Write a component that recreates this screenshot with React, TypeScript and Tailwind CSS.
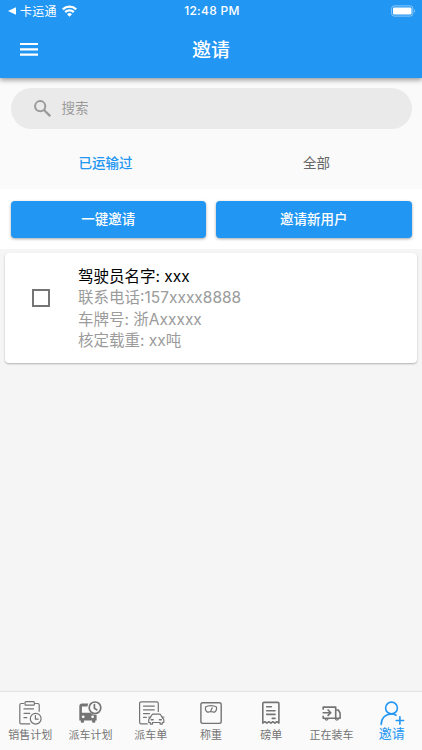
import React from 'react'

const Clock = ({ cx, cy, r }: { cx: number; cy: number; r: number }) => (
    <>
        <circle cx={cx} cy={cy} r={r} />
        <path d={`M${cx - 0.6} ${cy - 3.2}v3.7l2.4 1.6`} />
    </>
)

const iconProps = {
    viewBox: '0 0 24 24',
    fill: 'none',
    stroke: 'currentColor',
    strokeWidth: 1.2,
    strokeLinecap: 'round',
    strokeLinejoin: 'round',
    className: 'w-6 h-6 shrink-0 overflow-visible',
} as const

const PlanIcon = () => (
    <svg {...iconProps}>
        <path d="M5.6 2.5H3.2a1.4 1.4 0 0 0-1.4 1.4v17.5a1.4 1.4 0 0 0 1.4 1.4h8.6M17.6 2.5h2.2a1.4 1.4 0 0 1 1.4 1.4v6.3" />
        <rect x="7" y="0.7" width="9.4" height="3.5" rx="1" />
        <path d="M6 7.9h9.5M6 12.3h5.8M6 16.7h2.8" />
        <circle cx="17.7" cy="17.7" r="5.4" />
        <path d="M17.4 14.6v3.6h2.8" />
    </svg>
)

const BusIcon = () => (
    <svg {...iconProps}>
        <path
            d="M4 2.6h6.3a7.6 7.6 0 0 0-.8 3H3.9v6.1h8.4a8 8 0 0 0 6.3 2.4v5.3h-1.3v1.4a1 1 0 0 1-1 1h-1.2a1 1 0 0 1-1-1v-1.4H6v1.4a1 1 0 0 1-1 1H3.8a1 1 0 0 1-1-1v-1.4H1.3V5.4C1.3 3.5 2.4 2.6 4 2.6Z"
            fill="currentColor"
            stroke="none"
        />
        <circle cx="5.2" cy="15.8" r="1.4" fill="#fafafa" stroke="none" />
        <circle cx="14.6" cy="15.8" r="1.4" fill="#fafafa" stroke="none" />
        <g strokeWidth="1.7">
            <Clock cx={17} cy={6.8} r={5.8} />
        </g>
    </svg>
)

const DispatchIcon = () => (
    <svg {...iconProps}>
        <path d="M8.3 22.9H2.2A1.6 1.6 0 0 1 .6 21.3V2.4A1.6 1.6 0 0 1 2.2.8h15.5a1.6 1.6 0 0 1 1.6 1.6v8" />
        <path d="M4.5 5.1h10.8M4.5 8.8h10.8M4.5 12.6h6M4.5 16.4h2.8" />
        <path d="m11 17.1 1.8-3.1q.4-.8 1.3-.8h6.4q.9 0 1.3.8l1.8 3.1q1.2.5 1.2 1.7v2.7h-1.5v1.6h-2.2v-1.6h-7.6v1.6h-2.2v-1.6H9.7v-2.7q0-1.2 1.3-1.7ZM9.7 16h1.6M23.3 16h1.6" />
        <path d="M12.3 18.7h1.8M20.5 18.7h1.8" strokeWidth="1.6" />
    </svg>
)

const ScaleIcon = () => (
    <svg {...iconProps}>
        <rect x="1.9" y="1.8" width="20.3" height="20.6" rx="1.8" strokeWidth="1.4" />
        <path d="M6.5 6.1c2.8-1.9 8.1-1.9 11 0 .4 2.5-.6 4.4-2.3 5.2-1.5-1-4.9-1-6.4 0C7.1 10.5 6.1 8.6 6.5 6.1ZM11.7 10.2l1.5-3.4" />
    </svg>
)

const BillIcon = () => (
    <svg {...iconProps} strokeWidth="1.6">
        <path d="M3.8 22.1V2.6q0-1.2 1.2-1.2h13.7q1.2 0 1.2 1.2v19.5l-2.1-1.4-1.9 1.5-2-1.5-2 1.5-2-1.5-2 1.5-2-1.5Z" />
        <path d="M7.7 5.7h4.7M7.7 9.7h8.3M7.7 13.4h8.3M13.3 17.4H16" />
    </svg>
)

const LoadingIcon = () => (
    <svg {...iconProps} strokeWidth="1.6" strokeLinecap="butt">
        <path d="M3.2 8.7V6.1h12.5v11.2M3.2 14.7v2.6h16.9v-5.1L18.3 9h-2.6" />
        <path d="M2.6 11.7h7.9M7.6 8.5l3.2 3.2-3.2 3.2" />
        <path d="M5 17.6a1.5 1.5 0 0 0 3 0M15.4 17.6a1.5 1.5 0 0 0 3 0" strokeWidth="1.3" />
    </svg>
)

const InviteIcon = () => (
    <svg {...iconProps} strokeWidth="1.6">
        <circle cx="11.5" cy="7" r="5.9" />
        <path d="M1.2 23.4C1.2 16.8 5.7 13 11.3 13c1.8 0 3.5.4 4.8 1.2M19.9 15.8v7.4M16.2 19.5h7.4" />
    </svg>
)

const tabs = [
    { label: '销售计划', icon: <PlanIcon /> },
    { label: '派车计划', icon: <BusIcon /> },
    { label: '派车单', icon: <DispatchIcon /> },
    { label: '称重', icon: <ScaleIcon /> },
    { label: '磅单', icon: <BillIcon /> },
    { label: '正在装车', icon: <LoadingIcon /> },
    { label: '邀请', icon: <InviteIcon />, active: true },
]

const App = () => {
    return (
        <div className="flex h-[750px] w-[422px] flex-col overflow-hidden bg-[#f5f5f5] font-['Inter','Noto_Sans_CJK_SC',sans-serif]">
            <header className="relative z-10 h-[78px] shrink-0 bg-[#2196f3] text-white shadow-[0_2px_5px_rgba(0,0,0,0.4)]">
                <div className="grid h-[22px] grid-cols-3 items-center pl-2 pr-1.5 text-[12px]">
                    <div className="flex items-center">
                        <svg className="h-2 w-2" viewBox="0 0 8 8" fill="currentColor">
                            <path d="M0 4 8 .2v7.6Z" />
                        </svg>
                        <span className="ml-1 pt-px leading-none tracking-[0.3px]">卡运通</span>
                        <svg className="-mt-px ml-[5px] h-3 w-[15px]" viewBox="0 0 15 12" fill="none" stroke="currentColor" strokeWidth="2.3">
                            <path d="M.8 4.4a9.6 9.6 0 0 1 13.4 0M3.2 7.2a6.2 6.2 0 0 1 8.6 0" />
                            <path d="M7.5 11.7 5 9.2a3.6 3.6 0 0 1 5 0Z" fill="currentColor" stroke="none" />
                        </svg>
                    </div>
                    <div className="whitespace-nowrap text-center font-medium leading-none tracking-[0.3px]">12:48 PM</div>
                    <svg className="-mt-px h-3 w-[25px] justify-self-end" viewBox="0 0 25 12" fill="none">
                        <rect x="0.6" y="0.9" width="21.2" height="10.2" rx="2.6" stroke="#8dc9f9" />
                        <rect x="2" y="2.4" width="18.5" height="7.2" rx="1.4" fill="#fff" />
                        <path d="M23.2 4.3v3.4q1-.5 1-1.7t-1-1.7Z" fill="#8dc9f9" />
                    </svg>
                </div>
                <div className="grid h-[54px] grid-cols-3 items-center px-5">
                    <svg className="h-[13px] w-[18px]" viewBox="0 0 18 13" fill="currentColor">
                        <path d="M0 0h18v2.1H0zM0 5.3h18v2.1H0zM0 10.6h18v2.1H0z" />
                    </svg>
                    <h1 className="pt-0.5 text-center text-[19px] font-medium leading-none">邀请</h1>
                </div>
            </header>

            <div className="h-[111px] shrink-0 bg-[#fafafa] pt-2.5">
                <div className="mx-[10.5px] flex h-[40.5px] items-center rounded-full bg-[#eaeaea] pl-[23px] text-[#9a9a9a]">
                    <svg className="h-[17px] w-[17px]" viewBox="0 0 17 17" fill="none" stroke="currentColor" strokeWidth="2">
                        <circle cx="6.2" cy="6.2" r="5.1" />
                        <path d="m10 10 6.2 6.2" strokeWidth="2.3" />
                    </svg>
                    <span className="ml-[11px] text-[13.5px]">搜索</span>
                </div>
                <div className="grid h-[60px] grid-cols-2 items-center pt-2.5 text-center text-[13.5px]">
                    <div className="font-medium text-[#2196f3]">已运输过</div>
                    <div className="text-[#666]">全部</div>
                </div>
            </div>

            <div className="flex h-[60px] shrink-0 gap-2.5 bg-white px-[10.5px] pt-3">
                <button className="h-[36.5px] flex-1 rounded bg-[#2196f3] text-[13.5px] font-medium text-white shadow-[0_1px_3px_rgba(0,0,0,0.35)]">一键邀请</button>
                <button className="h-[36.5px] flex-1 rounded bg-[#2196f3] text-[13.5px] font-medium text-white shadow-[0_1px_3px_rgba(0,0,0,0.35)]">邀请新用户</button>
            </div>

            <main className="flex-1 pt-1">
                <div className="mx-[5px] flex h-[109.5px] items-start rounded bg-white pt-3 shadow-[0_1px_2px_rgba(0,0,0,0.28)]">
                    <div className="ml-[27px] mt-[24px] h-[18px] w-[18px] border-2 border-[#757575]"></div>
                    <div className="ml-7 pt-[0.5px] text-[15.5px] leading-[21.5px] text-[#9b9b9b]">
                        <div className="text-black">驾驶员名字: xxx</div>
                        <div>联系电话:157xxxx8888</div>
                        <div>车牌号: 浙Axxxxx</div>
                        <div>核定载重: xx吨</div>
                    </div>
                </div>
            </main>

            <nav className="grid h-[58px] shrink-0 grid-cols-7 bg-[#fafafa] pt-[9px] shadow-[0_-1px_1px_rgba(0,0,0,0.07)]">
                {tabs.map((tab) => (
                    <div key={tab.label} className={tab.active ? 'flex flex-col items-center text-[#2196f3]' : 'flex flex-col items-center text-[#747474]'}>
                        {tab.icon}
                        <span className={tab.active ? 'text-[13px] leading-4' : 'mt-px text-[11px] leading-[18px]'}>{tab.label}</span>
                    </div>
                ))}
            </nav>
        </div>
    )
}

export default App
